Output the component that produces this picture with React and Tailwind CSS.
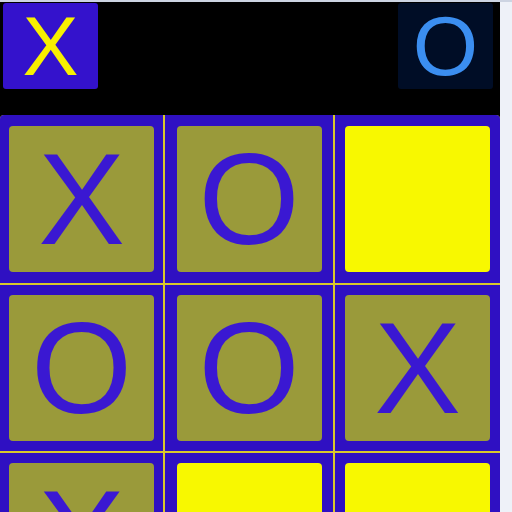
import React from "react";

const board = [
  ["X", "O", ""],
  ["O", "O", "X"],
  ["X", "", ""],
];

const Tile = ({ value }) => {
  const empty = !value;
  return (
    <div
      className={`w-[145px] h-[146px] rounded-[4px] flex items-center justify-center ${
        empty ? "bg-[#f8f800]" : "bg-[#9a9a3a]"
      }`}
    >
      {value && (
        <span className="text-[130px] leading-none text-[#3a18d2]">{value}</span>
      )}
    </div>
  );
};

export default function App() {
  return (
    <div className="min-h-[512px] w-[512px] bg-[#eef1f8] overflow-hidden font-['Liberation_Sans',Arial,sans-serif]">
      <div className="h-[2px] bg-[#cdd4e2]" />
      <div className="w-[500px] bg-black">
        {/* players */}
        <div className="flex justify-between items-start pl-[3px] pr-[7px] pt-[1px] h-[113px]">
          <div className="w-[95px] h-[86px] rounded-[3px] bg-[#3412cc] flex items-center justify-center">
            <span className="text-[84px] leading-none text-[#f8f000]">X</span>
          </div>
          <div className="w-[95px] h-[86px] rounded-[3px] bg-[#000d26] flex items-center justify-center">
            <span className="text-[84px] leading-none text-[#3b8ef0]">O</span>
          </div>
        </div>

        {/* board */}
        <div className="bg-[#2f10c2] rounded-[4px] w-[500px] overflow-hidden">
          <div className="grid grid-cols-[163px_168px_165px] grid-rows-[168px_166px_166px] gap-[2px] bg-[#d9c92c]">
            {board.flat().map((v, i) => (
              <div key={i} className="bg-[#2f10c2] flex items-center justify-center">
                <Tile value={v} />
              </div>
            ))}
          </div>
        </div>
      </div>
    </div>
  );
}
